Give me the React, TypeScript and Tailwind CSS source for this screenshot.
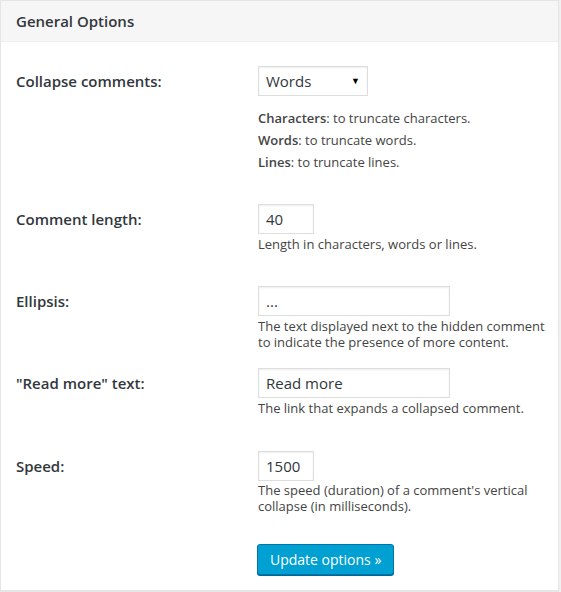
import React from "react";

const font = { fontFamily: '"Open Sans", "Liberation Sans", sans-serif' };

function Row({
  label,
  top,
  children,
}: {
  label: string;
  top: string;
  children: React.ReactNode;
}) {
  return (
    <div className={`flex ${top}`}>
      <div className="w-[242px] shrink-0 pt-[5px] text-[15px] font-semibold leading-5 text-[#32373c]">
        {label}
      </div>
      <div className="flex flex-col items-start">{children}</div>
    </div>
  );
}

const inputCls =
  "h-[30px] border border-[#dddddd] bg-white px-[7px] text-[15px] text-[#32373c] shadow-[inset_0_1px_2px_rgba(0,0,0,0.07)] outline-none";

export default function App() {
  return (
    <div className="min-h-[592px] w-[561px] bg-[#f1f1f1]" style={font}>
      <div className="w-[559px] border border-[#e5e5e5] bg-white shadow-[0_1px_1px_rgba(0,0,0,0.04)]">
        <div className="h-[41px] border-b border-[#eeeeee] bg-[#f6f6f6] px-[15px] pt-[10px]">
          <h2 className="text-[15px] font-semibold leading-5 text-[#32373c]">
            General Options
          </h2>
        </div>

        <div className="px-[15px] pb-[15px]">
          <Row label="Collapse comments:" top="pt-[24px]">
            <div className="relative">
              <select
                defaultValue="words"
                className={`${inputCls} w-[110px] appearance-none pr-6`}
              >
                <option value="characters">Characters</option>
                <option value="words">Words</option>
                <option value="lines">Lines</option>
              </select>
              <span className="pointer-events-none absolute right-[8px] top-[8px] text-[9px] text-black">
                ▼
              </span>
            </div>
            <div className="mt-[11px] text-[13px] leading-[22px] text-[#444444]">
              <p>
                <span className="font-semibold">Characters</span>: to truncate
                characters.
              </p>
              <p>
                <span className="font-semibold">Words</span>: to truncate words.
              </p>
              <p>
                <span className="font-semibold">Lines</span>: to truncate lines.
              </p>
            </div>
          </Row>

          <Row label="Comment length:" top="pt-[31px]">
            <input defaultValue="40" className={`${inputCls} w-[56px]`} />
            <p className="mt-[2px] text-[13px] leading-[17px] text-[#444444]">
              Length in characters, words or lines.
            </p>
          </Row>

          <Row label="Ellipsis:" top="pt-[33px]">
            <input defaultValue="..." className={`${inputCls} w-[192px]`} />
            <p className="mt-[2px] w-[290px] text-[13px] leading-[16px] text-[#444444]">
              The text displayed next to the hidden comment to indicate the
              presence of more content.
            </p>
          </Row>

          <Row label={'"Read more" text:'} top="pt-[18px]">
            <input defaultValue="Read more" className={`${inputCls} w-[192px]`} />
            <p className="mt-[2px] text-[13px] leading-[17px] text-[#444444]">
              The link that expands a collapsed comment.
            </p>
          </Row>

          <Row label="Speed:" top="pt-[34px]">
            <input defaultValue="1500" className={`${inputCls} w-[56px]`} />
            <p className="mt-[1px] w-[290px] text-[13px] leading-[16px] text-[#444444]">
              The speed (duration) of a comment's vertical collapse (in
              milliseconds).
            </p>
          </Row>

          <div className="pl-[241px] pt-[30px]">
            <button className="h-[31px] rounded-[3px] border border-[#0073aa] bg-[#00a0d2] px-[12px] text-[14px] text-white shadow-[0_1px_0_#006799]">
              Update options »
            </button>
          </div>
        </div>
      </div>
    </div>
  );
}
